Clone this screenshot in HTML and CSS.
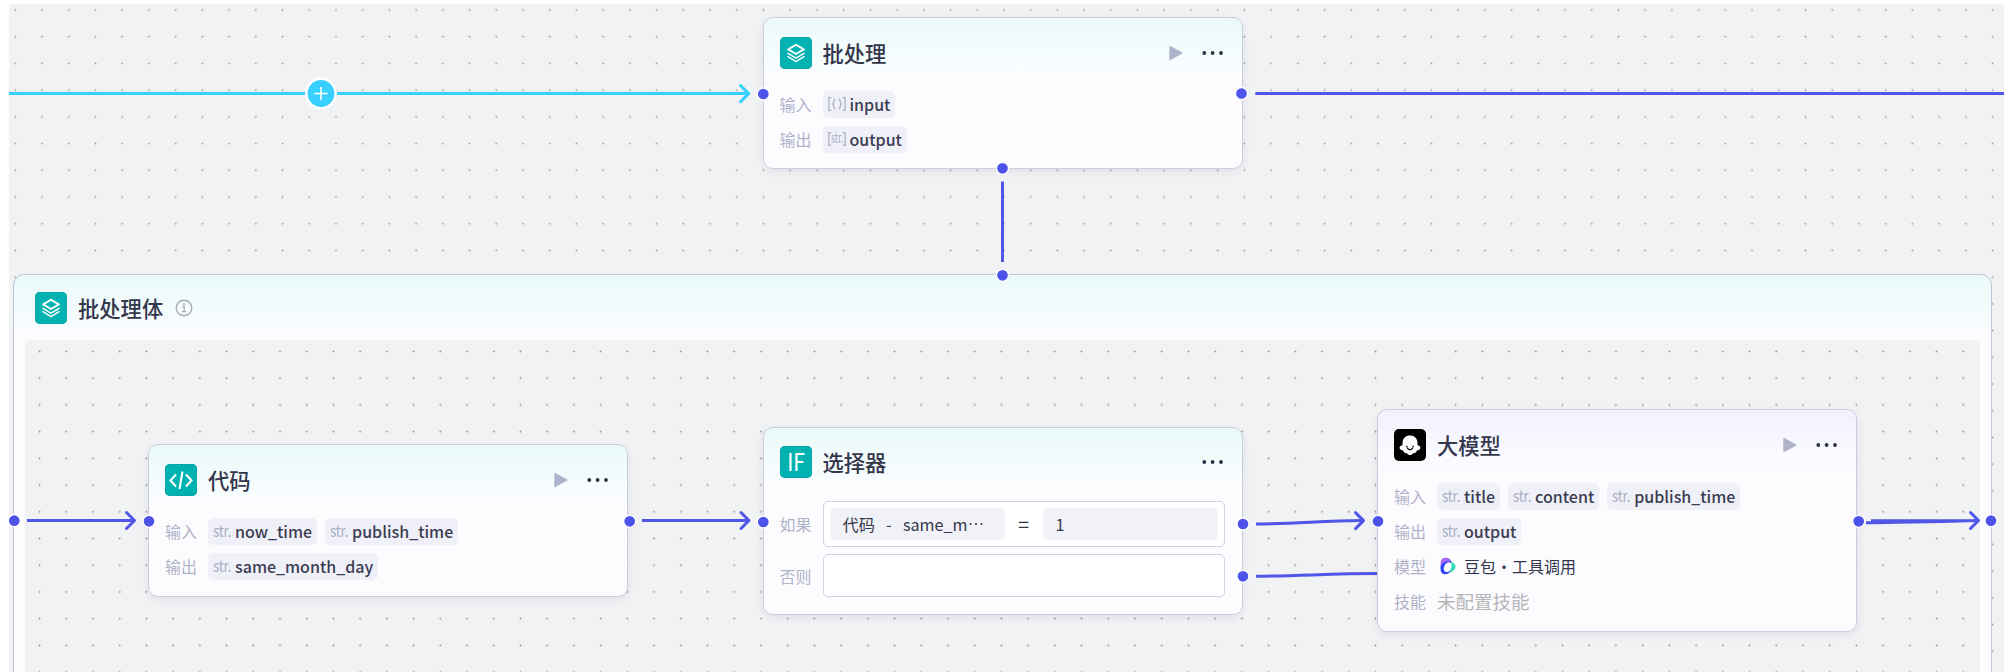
FILE: index.html
```html
<!DOCTYPE html>
<html lang="zh-CN">
<head>
<meta charset="utf-8">
<title>批处理</title>
<link rel="stylesheet" href="styles.css">
</head>
<body>
<svg class="defs" width="0" height="0">
  <defs>
    <symbol id="layers" viewBox="0 0 32 32">
      <g fill="none" stroke="#fff" stroke-linejoin="round" stroke-linecap="round">
        <path d="M16 7.800 L23.800 12.400 L16 17 L8.200 12.400Z" stroke-width="1.900"/>
        <path d="M8 16.400 L16 21.200 L24 16.400" stroke-width="1.400"/>
        <path d="M8 19.700 L16 24.600 L24 19.700" stroke-width="1.400"/>
      </g>
    </symbol>
    <symbol id="play" viewBox="0 0 14 16"><path d="M1 1.5 L13 8 L1 14.5Z" fill="#aeb3c9" stroke="#aeb3c9" stroke-width="1.4" stroke-linejoin="round"/></symbol>
    <symbol id="more" viewBox="0 0 22 4"><g fill="#2f3149"><circle cx="2.3" cy="2" r="1.9"/><circle cx="10.6" cy="2" r="1.9"/><circle cx="19" cy="2" r="1.9"/></g></symbol>
  </defs>
</svg>
<main class="canvas">
  <section class="batch">
    <header class="batch-head">
      <svg class="icon teal"><use href="#layers"/></svg>
      <h2 class="title">批处理体</h2>
      <svg class="info" viewBox="0 0 18 18"><circle cx="9" cy="9" r="7.8" fill="none" stroke="#a9abb3" stroke-width="1.4"/><path d="M7.3 7.7H9.2V12.4M7 12.6H11.2" fill="none" stroke="#a9abb3" stroke-width="1.2"/><circle cx="9" cy="5.3" r="1" fill="#a9abb3"/></svg>
    </header>
    <div class="batch-body"></div>
  </section>

  <svg class="wires" viewBox="0 0 2007 672"><path d="M1256 576.200C1300 576 1330 573.600 1378 573.600" class="wire"/></svg>

  <article class="node node-batch">
    <header class="head"><svg class="icon teal"><use href="#layers"/></svg><h2 class="title">批处理</h2><svg class="play"><use href="#play"/></svg><svg class="more"><use href="#more"/></svg></header>
    <div class="row"><span class="label">输入</span><span class="tag"><i class="type"><svg class="bracket" viewBox="0 0 18 14"><path d="M3.500 .700H.900V13.300H3.500M14.500 .700H17.100V13.300H14.500M7.300 2C5 2 6.700 6 4.700 7C6.700 8 5 12 7.300 12M10.700 2C13 2 11.300 6 13.300 7C11.300 8 13 12 10.700 12"/></svg></i>input</span></div>
    <div class="row"><span class="label">输出</span><span class="tag"><i class="type"><b class="arr-text">str.</b><svg class="bracket" viewBox="0 0 18 14"><path d="M3.200 .700H.900V13.300H3.200M14.800 .700H17.100V13.300H14.800"/></svg></i>output</span></div>
  </article>

  <article class="node node-code">
    <header class="head"><svg class="icon teal" viewBox="0 0 32 32"><path d="M11 10.500L5.500 16.500L11 22.500M21 10.500L26.500 16.500L21 22.500M17.500 7.500L14.500 25" fill="none" stroke="#fff" stroke-width="2.100"/></svg><h2 class="title">代码</h2><svg class="play"><use href="#play"/></svg><svg class="more"><use href="#more"/></svg></header>
    <div class="row"><span class="label">输入</span><span class="tag"><i class="type"><b class="str">str.</b></i>now_time</span><span class="tag"><i class="type"><b class="str">str.</b></i>publish_time</span></div>
    <div class="row"><span class="label">输出</span><span class="tag"><i class="type"><b class="str">str.</b></i>same_month_day</span></div>
  </article>

  <article class="node node-if">
    <header class="head"><svg class="icon teal" viewBox="0 0 32 32"><path d="M10.500 7V25M16.500 25V8H24.500M16.500 16H23.500" fill="none" stroke="#fff" stroke-width="2.200"/></svg><h2 class="title">选择器</h2><svg class="more"><use href="#more"/></svg></header>
    <div class="branch"><span class="label">如果</span><div class="box"><span class="operand">代码<span class="dash">-</span>same_m<svg class="dots" viewBox="0 0 16 4"><g fill="#32344b"><circle cx="2.500" cy="2" r="1.100"/><circle cx="8" cy="2" r="1.100"/><circle cx="13.500" cy="2" r="1.100"/></g></svg></span><span class="eq">=</span><span class="operand">1</span></div></div>
    <div class="branch else"><span class="label">否则</span><div class="box"></div></div>
  </article>

  <article class="node node-llm">
    <header class="head"><svg class="icon black" viewBox="0 0 32 32"><path d="M8.500 14C8.500 9 12 6.500 16 6.500S23.500 9 23.500 14V16.300C25 16.300 26.500 17.500 26.500 19C26 20.500 24.500 21.300 23 21.300C22.500 23.500 21 24.500 19.300 24C18.500 25.600 17.300 26 16 26S13.500 25.600 12.700 24C11 24.500 9.500 23.500 9 21.300C7.500 21.300 6 20.500 5.500 19C5.500 17.500 7 16.300 8.500 16.300Z" fill="#fff"/><path d="M13.300 18.800C14.300 21.300 17.700 21.300 18.700 18.800" fill="none" stroke="#000" stroke-width="1.200" stroke-linecap="round"/><circle cx="12.800" cy="17.300" r=".8"/><circle cx="19.200" cy="17.300" r=".8"/></svg><h2 class="title">大模型</h2><svg class="play"><use href="#play"/></svg><svg class="more"><use href="#more"/></svg></header>
    <div class="row"><span class="label">输入</span><span class="tag"><i class="type"><b class="str">str.</b></i>title</span><span class="tag"><i class="type"><b class="str">str.</b></i>content</span><span class="tag"><i class="type"><b class="str">str.</b></i>publish_time</span></div>
    <div class="row"><span class="label">输出</span><span class="tag"><i class="type"><b class="str">str.</b></i>output</span></div>
    <div class="row"><span class="label">模型</span><svg class="model-logo" viewBox="0 0 16 18"><path d="M1 12C0 6 .5 1 5 .8C9 .5 11.500 3 12.300 6.500C8.500 4 3.500 6 2.500 13Z" fill="#a667fb"/><path d="M10.500 4.500C13 5 15.500 7 15.500 9.500C15.500 13 12 15.500 8.500 15.500C11.500 12 12.500 8 10.500 4.500Z" fill="#35dfb5"/><path d="M.8 9C.2 13 .8 17.300 5 17.300C8 17.300 10 15.500 11 13C9 15 6.500 15.700 5 14.500C2.700 12.500 3.800 8.500 6.500 6C8 4.800 9.500 4.600 11.800 6L10.500 4.300C6 4 2.500 5.500 .8 9Z" fill="#2a45f7"/></svg><span class="model">豆包・工具调用</span></div>
    <div class="row"><span class="label">技能</span><span class="empty">未配置技能</span></div>
  </article>

  <svg class="wires" viewBox="0 0 2007 672">
    <g class="wire active"><path d="M9 93.600H748"/><path class="tip" d="M740.500 85.500L748.700 93.600L740.500 101.700"/></g>
    <circle cx="321" cy="93.500" r="16" fill="#fff"/><circle cx="321" cy="93.500" r="13.400" fill="#37d0ff"/><path d="M314.500 93.500H327.500M321 87V100" stroke="#fff" stroke-width="1.600"/>
    <g class="wire">
      <path d="M1255.300 93.500H2004"/><path d="M1002.500 181.500V262"/>
      <path d="M27 520.500H134"/><path class="tip" d="M126.500 512.500L134.500 520.500L126.500 528.500"/>
      <path d="M642 520.500H748"/><path class="tip" d="M741 512.500L749 520.500L741 528.500"/>
      <path d="M1256 524C1300 524 1320 520.600 1363 520.600"/><path class="tip" d="M1355.500 512.600L1363.500 520.600L1355.500 528.600"/>
      <path d="M1866 522.800C1900 522.500 1940 521.500 1978 520.500M1871 520.700H1978"/><path class="tip" d="M1970.500 512.500L1978.500 520.500L1970.500 528.500"/>
    </g>
    <g class="port">
      <circle cx="763.300" cy="94" r="6"/><circle cx="1241.500" cy="93.500" r="6"/><circle cx="1002.500" cy="168.300" r="6"/><circle cx="1002.500" cy="275.300" r="6"/>
      <circle cx="14.300" cy="520.700" r="6"/><circle cx="149" cy="521.300" r="6"/><circle cx="629.700" cy="521.300" r="6"/><circle cx="763.300" cy="522" r="6"/>
      <circle cx="1243" cy="524" r="6"/><circle cx="1243" cy="576.300" r="6"/><circle cx="1378" cy="521.300" r="6"/><circle cx="1858.700" cy="521.300" r="6"/><circle cx="1991" cy="520.700" r="6"/>
    </g>
  </svg>
</main>
</body>
</html>
```
FILE: styles.css
```css
* { box-sizing: border-box; }
body {
  margin: 0;
  background: #fff;
  font-family: "Noto Sans CJK SC", "Noto Sans", sans-serif;
  color: #34364c;
}
.defs { position: absolute; }

/* Dotted free canvas that holds the nodes */
.canvas {
  position: relative;
  width: 2007px;
  height: 672px;
  overflow: hidden;
}
.canvas::before {
  content: "";
  position: absolute;
  inset: 4px 3px 0 9px;
  background: radial-gradient(circle at center, #a2a3a7 0, #b4b5b9 .8px, transparent 1.3px) -7px -7.400px / 26.720px 26.720px #f1f2f4;
}

.batch {
  position: absolute;
  left: 13px;
  top: 274px;
  width: 1979px;
  height: 420px;
  padding: 0 11px;
  border: 1px solid #c0c5d9;
  border-radius: 11px;
  background: linear-gradient(#eaf9f9 0, #f7fcfe 50px, #fcfcff 58px);
}
.batch-head { display: flex; align-items: center; height: 65px; padding-left: 10px; }
.batch-body {
  height: 360px;
  border-radius: 5px;
  background: radial-gradient(circle at center, #96979c 0, #abacb0 .8px, transparent 1.3px) 1.200px -1.900px / 26.720px 26.720px #f1f2f4;
}
.info { width: 18px; height: 18px; margin-left: 12px; }

.node {
  position: absolute;
  width: 480px;
  padding: 0 17px 0 16px;
  border: 1px solid #cbcde1;
  border-radius: 10px;
  background: linear-gradient(#eaf9f8 0, #f8fdfe 50px, #fcfcff 58px);
  box-shadow: 0 3px 8px rgba(35, 40, 70, .08);
}
.node-batch { left: 762.500px; top: 17px; height: 152px; }
.node-code { left: 148px; top: 444px; height: 153px; }
.node-if { left: 762.500px; top: 427px; height: 188px; }
.node-llm { left: 1377px; top: 409px; height: 223px; background: linear-gradient(#f2f2ff 0, #fcfcff 60px); }

.head { display: flex; align-items: center; height: 69px; }
.node-if .head { height: 68px; }
.icon { width: 32px; height: 32px; border-radius: 5px; flex: none; }
.teal { background: #00b2b2; box-shadow: inset 0 0 0 1px #0aa5a7; }
.black { background: #000; }
.title { margin: 0 0 0 11px; font-weight: 500; font-size: 21.300px; line-height: 30px; }
.play { width: 14px; height: 16px; margin-left: auto; }
.more { width: 22px; height: 4px; margin: 0 1px 0 19px; }
.title + .more { margin-left: auto; }

.row { display: flex; align-items: center; gap: 8px; height: 34.800px; }
.label { width: 43px; flex: none; font-size: 16px; line-height: 24px; color: #afb2c9; }
.row .label { margin-right: -8px; }
.tag {
  display: flex;
  align-items: center;
  height: 27px;
  padding: 0 5px;
  border-radius: 5px;
  background: #f0f0f8;
  font-weight: 500;
  font-size: 16px;
  line-height: 27px;
  color: #3a3c52;
}
.type { position: relative; width: 22px; font-style: normal; color: #a9adc4; }
.str { display: block; width: 20px; font-weight: 400; font-size: 16px; line-height: 25px; transform: scaleX(.83); transform-origin: left; letter-spacing: -.2px; margin-top: -2px; }
.bracket { display: block; width: 18px; height: 14px; fill: none; stroke: #a9adc4; stroke-width: 1.200; }
.arr-text { position: absolute; left: 3px; top: -7px; font-weight: 400; font-size: 13.500px; line-height: 25px; transform: scaleX(.62); transform-origin: left; }
.model-logo { width: 16px; height: 18px; margin-left: 3px; }
.model { font-size: 16px; line-height: 24px; }
.empty { font-size: 18.500px; line-height: 24px; color: #b5b5b9; }

.branch { display: flex; align-items: center; height: 46px; margin-top: 5px; }
.branch.else { height: 43px; margin-top: 7px; }
.box {
  display: flex;
  align-items: center;
  flex: 1;
  height: 100%;
  padding: 0 6px;
  border: 1px solid #d0d2e3;
  border-radius: 5px;
  background: #fff;
}
.operand { flex: 1; height: 32px; padding: 0 13px; border-radius: 5px; background: #f1f2f8; font-size: 16.200px; line-height: 32px; white-space: nowrap; }
.eq { width: 38px; text-align: center; font-size: 20px; line-height: 30px; }
.dash { display: inline-block; width: 28px; text-align: center; }
.dots { width: 16px; height: 4px; vertical-align: 5px; }

.wires { position: absolute; inset: 0; width: 2007px; height: 672px; pointer-events: none; }
.wire { fill: none; stroke: #4f56e8; stroke-width: 3; }
.tip { stroke-linecap: round; stroke-linejoin: round; }
.active { stroke: #37d0ff; }
.port { fill: #4d53e8; stroke: #fff; stroke-width: 1.300; }
```
